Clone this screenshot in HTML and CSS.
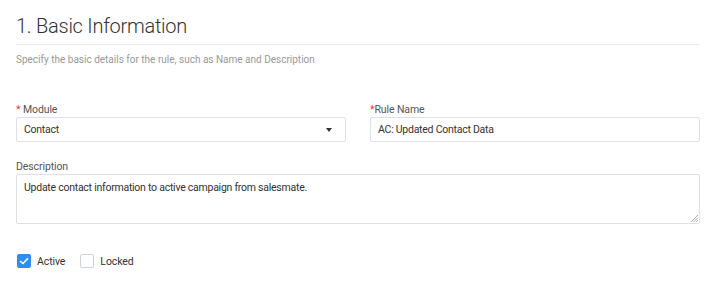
FILE: index.html
```html
<!DOCTYPE html>
<html lang="en">
<head>
  <meta charset="UTF-8" />
  <title>Basic Information</title>
  <link rel="stylesheet" href="styles.css">
</head>
<body>
  <section class="step">
    <h1 class="step-title">1. Basic Information</h1>
    <p class="step-hint">Specify the basic details for the rule, such as Name and Description</p>

    <div class="row">
      <div class="field">
        <label class="field-label"><span class="req">* </span>Module</label>
        <div class="select">
          <span>Contact</span>
          <span class="caret"></span>
        </div>
      </div>
      <div class="field">
        <label class="field-label"><span class="req">*</span>Rule Name</label>
        <div class="input">AC: Updated Contact Data</div>
      </div>
    </div>

    <div class="field field-full">
      <label class="field-label">Description</label>
      <div class="textarea">
        Update contact information to active campaign from salesmate.
        <svg class="grip" width="8" height="8" viewBox="0 0 8 8">
          <path d="M8 1 L1 8 M8 3.5 L3.5 8 M8 6 L6 8" stroke="#999" stroke-width="0.8"/>
        </svg>
      </div>
    </div>

    <div class="checks">
      <label class="check">
        <span class="box checked">
          <svg width="10" height="8" viewBox="0 0 10 8"><path d="M1 4 L4 6.5 L9 1.2" fill="none" stroke="#fff" stroke-width="1.6"/></svg>
        </span>
        Active
      </label>
      <label class="check">
        <span class="box"></span>
        Locked
      </label>
    </div>
  </section>
</body>
</html>
```

FILE: styles.css
```css
* {
  margin: 0;
  padding: 0;
  box-sizing: border-box;
}

body {
  font-family: Roboto, 'Liberation Sans', sans-serif;
  background: #fff;
  color: #333;
  padding: 13px 16px;
}

.step-title {
  font-size: 20px;
  font-weight: 300;
  letter-spacing: -0.25px;
  line-height: 26px;
  color: #333;
  padding-bottom: 5px;
  border-bottom: 1px solid #eaeaea;
}

.step-hint {
  margin-top: 7px;
  font-size: 10px;
  line-height: 16px;
  color: #999;
}

.row {
  display: grid;
  grid-template-columns: 1fr 1fr;
  gap: 24px;
  margin-top: 34px;
}

.field-label {
  display: block;
  font-size: 10.5px;
  letter-spacing: -0.1px;
  line-height: 11px;
  padding-top: 2px;
  margin-bottom: 2px;
  color: #555;
}

.req {
  color: #e53935;
}

.select,
.input,
.textarea {
  position: relative;
  border: 1px solid #dde1e6;
  border-radius: 2px;
  font-size: 10.5px;
  letter-spacing: -0.25px;
  color: #333;
  padding: 0 7px;
}

.select,
.input {
  display: flex;
  align-items: center;
  height: 25px;
}

.select {
  justify-content: space-between;
  padding-right: 13px;
}

.caret {
  width: 0;
  height: 0;
  border-left: 3.5px solid transparent;
  border-right: 3.5px solid transparent;
  border-top: 4px solid #333;
}

.field-full {
  margin-top: 17px;
}

.textarea {
  height: 50px;
  padding-top: 6px;
}

.grip {
  position: absolute;
  right: 1px;
  bottom: 1px;
}

.checks {
  display: flex;
  gap: 14px;
  margin-top: 30px;
}

.check {
  display: flex;
  align-items: center;
  gap: 6px;
  font-size: 10.5px;
  letter-spacing: -0.1px;
  color: #333;
}

.box {
  display: flex;
  align-items: center;
  justify-content: center;
  width: 14px;
  height: 14px;
  border: 1px solid #ccd3db;
  border-radius: 2px;
  margin-left: 1px;
}

.box.checked {
  background: #2d8ef0;
  border-color: #2d8ef0;
}
```
